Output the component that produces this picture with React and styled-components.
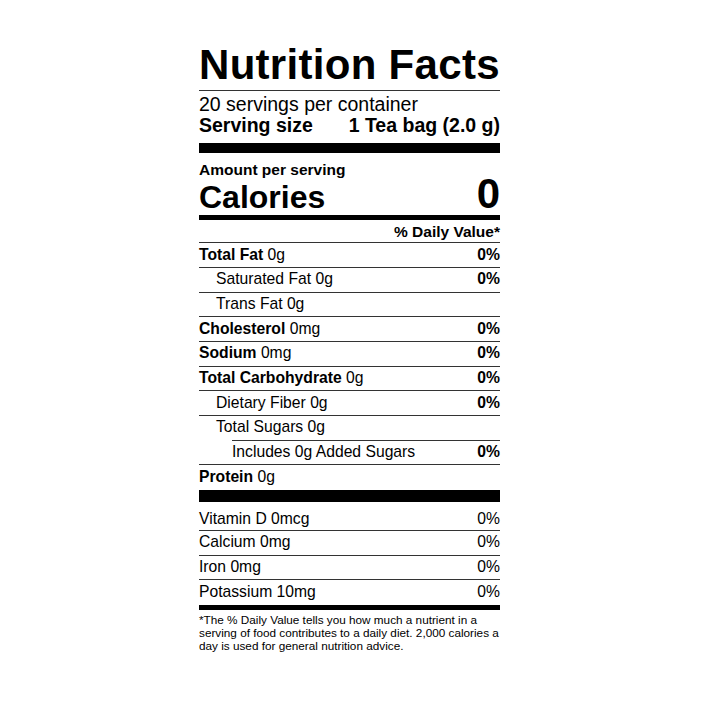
import React from 'react';
import styled, { createGlobalStyle } from 'styled-components';

const Global = createGlobalStyle`
  body {
    margin: 0;
    background: #fff;
  }
`;

const S = {
  Page: styled.div`
    padding-top: 44px;
  `,
  Label: styled.div`
    width: 301px;
    margin-left: 199px;
    font-family: 'Liberation Sans', Arial, sans-serif;
    color: #000;
  `,
  Title: styled.h1`
    margin: 0;
    font-size: 42px;
    line-height: 42px;
    font-weight: 700;
    letter-spacing: 0.3px;
    white-space: nowrap;
    padding-bottom: 4px;
    border-bottom: 1px solid #333;
  `,
  Servings: styled.div`
    padding: 2.5px 0 7.5px;
    border-bottom: 10px solid #000;
    font-size: 19.5px;
    line-height: 21px;
    white-space: nowrap;
  `,
  ServingSize: styled.div`
    display: flex;
    justify-content: space-between;
    font-weight: 700;
  `,
  Amount: styled.div`
    padding: 8.6px 0 2px;
    border-bottom: 5px solid #000;
  `,
  SmallBold: styled.div`
    font-size: 15.5px;
    line-height: 16px;
    font-weight: 700;
    text-align: ${(p) => p.$align || 'left'};
  `,
  Calories: styled.div`
    display: flex;
    justify-content: space-between;
    align-items: baseline;
    font-weight: 700;
  `,
  CalWord: styled.span`
    font-size: 32px;
    line-height: 32px;
  `,
  CalValue: styled.span`
    font-size: 42px;
    line-height: 32px;
  `,
  DvHead: styled.div`
    padding: 4.3px 0 2.4px;
  `,
  Row: styled.div`
    display: flex;
    justify-content: space-between;
    box-sizing: border-box;
    height: ${(p) => (p.$first ? '27.6px' : '24.67px')};
    padding-top: ${(p) => (p.$first ? '5.6px' : '0.4px')};
    padding-left: ${(p) => p.$indent || 0}px;
    margin-left: ${(p) => p.$offset || 0}px;
    border-top: ${(p) => (p.$first ? 'none' : '1px solid #333')};
    font-size: 15.7px;
    line-height: 22px;
    white-space: nowrap;
  `,
  Name: styled.span`
    font-weight: 700;
  `,
  Pct: styled.span`
    font-weight: ${(p) => (p.$plain ? 400 : 700)};
  `,
  Bar: styled.div`
    height: ${(p) => p.$h}px;
    margin-top: ${(p) => p.$mt || 0}px;
    background: #000;
  `,
  Note: styled.p`
    margin: 0;
    padding-top: 2.5px;
    font-size: 11.75px;
    line-height: 13px;
    white-space: nowrap;
  `,
};

const nutrients = [
  { name: 'Total Fat', amount: '0g', pct: '0%' },
  { label: 'Saturated Fat 0g', pct: '0%', indent: 17 },
  { label: 'Trans Fat 0g', indent: 17 },
  { name: 'Cholesterol', amount: '0mg', pct: '0%' },
  { name: 'Sodium', amount: '0mg', pct: '0%' },
  { name: 'Total Carbohydrate', amount: '0g', pct: '0%' },
  { label: 'Dietary Fiber 0g', pct: '0%', indent: 17 },
  { label: 'Total Sugars 0g', indent: 17 },
  { label: 'Includes 0g Added Sugars', pct: '0%', offset: 33 },
  { name: 'Protein', amount: '0g' },
];

const vitamins = [
  { label: 'Vitamin D 0mcg', pct: '0%' },
  { label: 'Calcium 0mg', pct: '0%' },
  { label: 'Iron 0mg', pct: '0%' },
  { label: 'Potassium 10mg', pct: '0%' },
];

const App = () => {
  return (
    <S.Page>
      <Global />
      <S.Label>
        <S.Title>Nutrition Facts</S.Title>
        <S.Servings>
          <div>20 servings per container</div>
          <S.ServingSize>
            <span>Serving size</span>
            <span>1 Tea bag (2.0 g)</span>
          </S.ServingSize>
        </S.Servings>

        <S.Amount>
          <S.SmallBold>Amount per serving</S.SmallBold>
          <S.Calories>
            <S.CalWord>Calories</S.CalWord>
            <S.CalValue>0</S.CalValue>
          </S.Calories>
        </S.Amount>

        <S.DvHead>
          <S.SmallBold $align="right">% Daily Value*</S.SmallBold>
        </S.DvHead>

        {nutrients.map((n, i) => (
          <S.Row key={i} $indent={n.indent} $offset={n.offset}>
            {n.name ? (
              <span>
                <S.Name>{n.name}</S.Name> {n.amount}
              </span>
            ) : (
              <span>{n.label}</span>
            )}
            {n.pct && <S.Pct>{n.pct}</S.Pct>}
          </S.Row>
        ))}
        <S.Bar $h={12} $mt={1.6} />

        {vitamins.map((v, i) => (
          <S.Row key={i} $first={i === 0}>
            <span>{v.label}</span>
            <S.Pct $plain>{v.pct}</S.Pct>
          </S.Row>
        ))}
        <S.Bar $h={5} $mt={1} />

        <S.Note>
          *The % Daily Value tells you how much a nutrient in a
          <br />
          serving of food contributes to a daily diet. 2,000 calories a
          <br />
          day is used for general nutrition advice.
        </S.Note>
      </S.Label>
    </S.Page>
  );
};

export default App;
